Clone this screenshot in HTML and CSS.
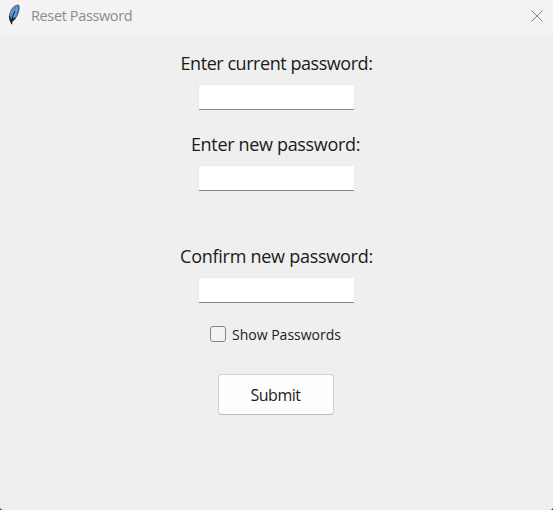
FILE: index.html
```
<!DOCTYPE html>
<html lang="en">
<head>
<meta charset="utf-8">
<title>Reset Password</title>
<link rel="stylesheet" href="styles.css">
</head>
<body>
<div class="window">
  <header class="titlebar">
    <svg class="feather" width="14" height="22" viewBox="0 0 14 22">
      <path d="M3.8 18.5C1.8 14 2.2 8.2 6 3.6C7.6 1.8 9.8 1 11.7 1.2C12.6 3.8 11.8 8 9.8 11.8C8.4 14.6 6.8 16.5 4.7 16.9Z" fill="#4c8bdd" stroke="#41464d" stroke-width="1"/>
      <path d="M4.7 4.8C6.2 2.6 8.5 1.2 11 1.3L8.2 4.2L5.4 8L3 13C2 10.4 3 7.5 4.7 4.8Z" fill="#777f88"/>
      <path d="M8.2 7C6.6 10 5 13 4.4 20.2M2.4 12.5L4 17M6 16.3L8.3 13.8" fill="none" stroke="#111" stroke-width="1.2"/>
      <path d="M9.8 3.4C9.6 7.5 8.6 10.4 6.5 13.4M6.8 5.2L4.6 10" fill="none" stroke="#67a2ea" stroke-width="1.5"/>
    </svg>
    <span class="title">Reset Password</span>
    <button class="close" aria-label="Close"><svg width="12" height="12" viewBox="0 0 12 12"><path d="M.4.4L11.6 11.6M11.6.4L.4 11.6" fill="none" stroke="#878787" stroke-width="1"/></svg></button>
  </header>
  <form class="form">
    <label class="label first" for="current">Enter current password:</label>
    <input class="field" id="current" type="password">
    <label class="label second" for="new">Enter new password:</label>
    <input class="field" id="new" type="password">
    <label class="label third" for="confirm">Confirm new password:</label>
    <input class="field" id="confirm" type="password">
    <label class="show"><input class="check" type="checkbox"><span>Show Passwords</span></label>
    <button class="submit" type="button">Submit</button>
  </form>
</div>
</body>
</html>
```
FILE: styles.css
```
* { box-sizing: border-box; }
html { background: #1c1c1c; }
body {
  margin: 0;
  font-family: "Open Sans", "Noto Sans", sans-serif;
  font-stretch: 92%;
  color: #1a1a1a;
}
.window {
  height: 510px;
  background: #efefef;
  border-radius: 0 0 3px 3px;
  overflow: hidden;
}
.titlebar {
  height: 36px;
  display: flex;
  align-items: flex-start;
  background: #f3f3f3;
}
.feather { margin: 4px 1px 0 7px; }
.title {
  margin: 5px 0 0 9px;
  font-size: 14.5px;
  line-height: 22px;
  letter-spacing: -0.37px;
  color: #8b8b8b;
  white-space: nowrap;
}
.close {
  margin: 10px 10px 0 auto;
  padding: 0;
  width: 12px;
  height: 12px;
  border: 0;
  background: none;
}
.close svg { display: block; }
.form {
  display: flex;
  flex-direction: column;
  align-items: center;
  padding-top: 14px;
}
.label {
  height: 26px;
  line-height: 26px;
  font-size: 18px;
  white-space: nowrap;
}
.field {
  width: 157px;
  height: 26px;
  margin: 8px 1px 0 0;
  border: 1px solid #e9e9e9;
  border-bottom: 1px solid #868686;
  border-radius: 2px;
  background: #fff;
  outline: 0;
}
.first { letter-spacing: -0.45px; }
.second { margin: 21px 2px 0 0; letter-spacing: -0.33px; }
.third { margin-top: 52px; letter-spacing: -0.26px; }
.show {
  display: flex;
  align-items: center;
  height: 20px;
  margin: 21px 2px 0 0;
  gap: 6px;
  font-size: 14px;
  white-space: nowrap;
}
.check {
  appearance: none;
  width: 16px;
  height: 16px;
  margin: 0;
  border: 1px solid #868686;
  border-radius: 3px;
  background: #f3f3f3;
}
.submit {
  width: 116px;
  height: 41px;
  margin: 30px 2px 0 0;
  padding: 1px 0 0;
  border: 1px solid #d2d2d2;
  border-bottom-color: #bdbdbd;
  border-radius: 4px;
  background: #fdfdfd;
  color: #1a1a1a;
  font-family: inherit;
  font-stretch: inherit;
  font-size: 16px;
  letter-spacing: -0.5px;
}
```
